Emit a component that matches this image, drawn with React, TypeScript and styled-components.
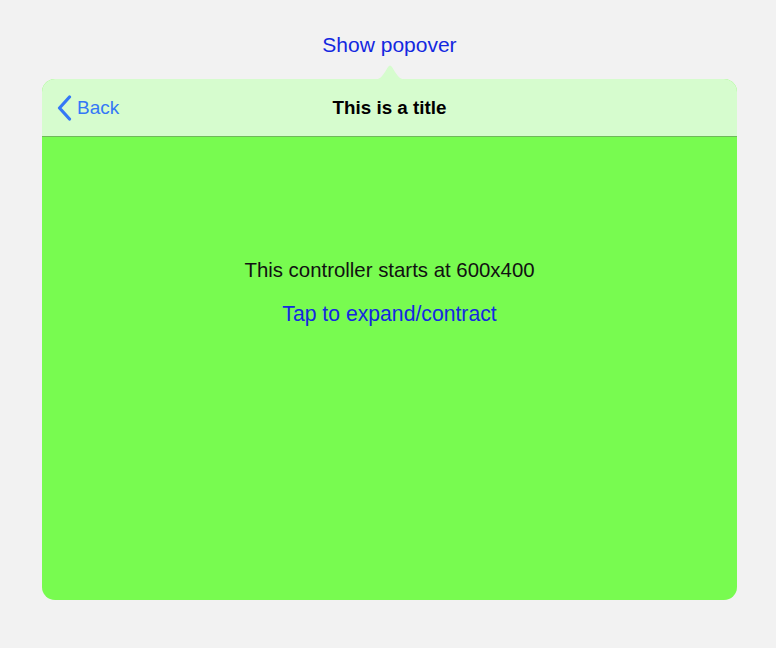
import React from "react";
import styled, { createGlobalStyle } from "styled-components";

const Global = createGlobalStyle`
  html, body { margin: 0; padding: 0; }
  body {
    background: #f2f2f2;
    font-family: "Liberation Sans", Arial, sans-serif;
    -webkit-font-smoothing: antialiased;
  }
`;

const Screen = styled.div`
  width: 776px;
  height: 648px;
  background: #f2f2f2;
  display: flex;
  flex-direction: column;
  align-items: center;
  box-sizing: border-box;
  padding-top: 33px;
`;

const TopButton = styled.button`
  border: 0;
  background: none;
  padding: 0;
  margin-left: 3px;
  font: inherit;
  font-size: 21px;
  line-height: 24px;
  color: #1428e0;
  cursor: pointer;
`;

const Popover = styled.div`
  position: relative;
  margin-top: 22px;
  width: 695px;
  height: 521px;
  margin-left: 3px;
  border-radius: 13px;
  background: #78fb50;
  display: flex;
  flex-direction: column;
`;

const Arrow = styled.svg`
  position: absolute;
  top: -16px;
  left: 329px;
`;

const NavBar = styled.div`
  height: 58px;
  background: #d6fcce;
  border-radius: 13px 13px 0 0;
  border-bottom: 1px solid #6fb85a;
  display: grid;
  grid-template-columns: 1fr auto 1fr;
  align-items: center;
  box-sizing: border-box;
  padding-top: 1px;
`;

const BackButton = styled.button`
  justify-self: start;
  display: flex;
  align-items: center;
  gap: 5px;
  border: 0;
  background: none;
  padding: 0 0 0 15px;
  font: inherit;
  font-size: 19px;
  color: #3478f6;
  cursor: pointer;
`;

const Title = styled.div`
  font-size: 18.8px;
  font-weight: bold;
  color: #000;
`;

const Body = styled.div`
  flex: 1;
  display: flex;
  flex-direction: column;
  align-items: center;
  padding-top: 121px;
  gap: 20px;
`;

const Message = styled.div`
  font-size: 20.4px;
  line-height: 24px;
  color: #111;
`;

const LinkButton = styled.button`
  border: 0;
  background: none;
  padding: 0;
  font: inherit;
  font-size: 21.2px;
  line-height: 24px;
  color: #1428e0;
  cursor: pointer;
`;

export default function App() {
  return (
    <>
      <Global />
      <Screen>
        <TopButton>Show popover</TopButton>
        <Popover>
          <Arrow width="38" height="17" viewBox="0 0 38 17">
            <path d="M0 17 C8 17 10 15 14 9 L17 4 Q19 1 21 4 L24 9 C28 15 30 17 38 17 Z" fill="#d6fcce" />
          </Arrow>
          <NavBar>
            <BackButton>
              <svg width="15" height="26" viewBox="0 0 15 26">
                <path d="M12.5 2 L2.5 13 L12.5 24" fill="none" stroke="#3478f6" strokeWidth="3.2" strokeLinecap="round" strokeLinejoin="round" />
              </svg>
              Back
            </BackButton>
            <Title>This is a title</Title>
            <div />
          </NavBar>
          <Body>
            <Message>This controller starts at 600x400</Message>
            <LinkButton>Tap to expand/contract</LinkButton>
          </Body>
        </Popover>
      </Screen>
    </>
  );
}
